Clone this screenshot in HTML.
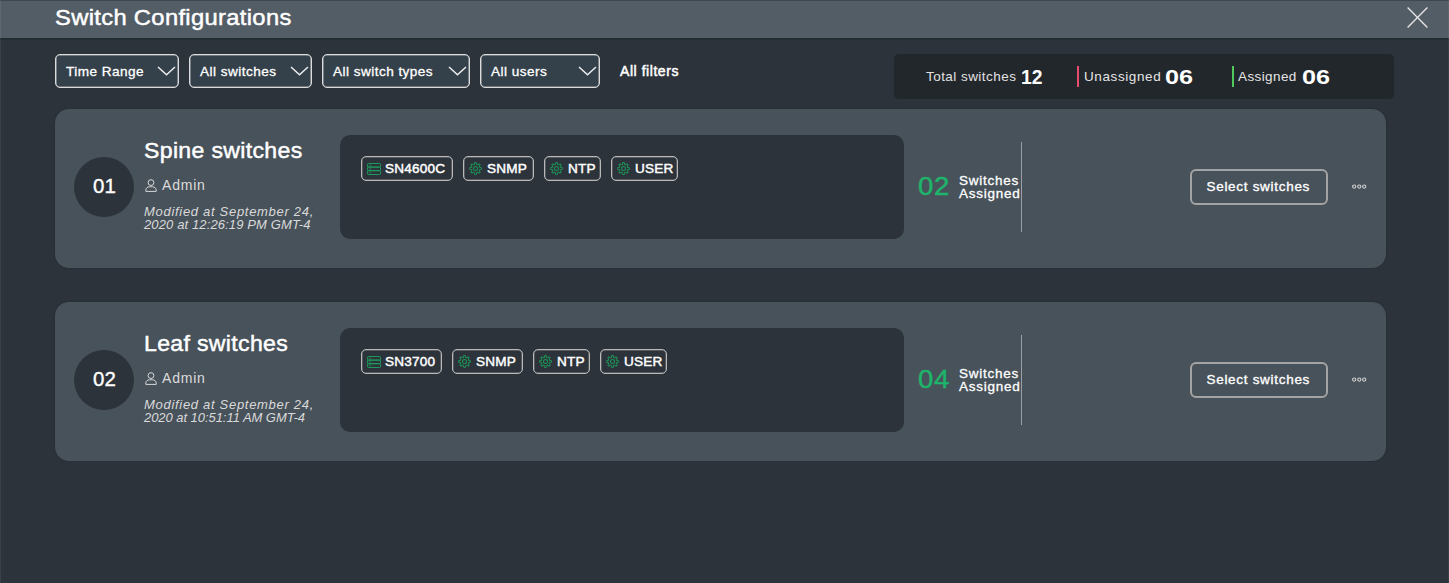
<!DOCTYPE html>
<html><head><meta charset="utf-8">
<style>
*{box-sizing:border-box;margin:0;padding:0}
html,body{width:1449px;height:583px;overflow:hidden;background:#2c333a;font-family:"Liberation Sans",sans-serif;color:#fff}
.abs{position:absolute}
#edgeL{left:0;top:0;width:1px;height:583px;background:rgba(255,255,255,0.065)}
#edgeR{right:0;top:0;width:1px;height:583px;background:rgba(255,255,255,0.065)}
#hdr{left:0;top:0;width:1449px;height:38px;background:#535d66;border-top:1px solid #3f474f}
#hdrline{left:0;top:38px;width:1449px;height:2px;background:#232c31}
.t{position:absolute;white-space:nowrap;line-height:1}
.dd{position:absolute;top:54px;height:34px;border:1px solid #dcdcdc;border-radius:5px;background:#35414a;box-shadow:inset 0 0 0 0.6px rgba(220,220,220,.7)}
.dd .lbl{position:absolute;left:10px;top:9.6px;font-size:13.6px;white-space:nowrap;line-height:1;letter-spacing:0.45px;-webkit-text-stroke:0.3px #fff}
.chev{position:absolute;right:2.2px;top:11.2px;width:19px;height:10px}
.stats{left:894px;top:54px;width:500px;height:45px;background:#22272b;border-radius:5px}
.card{position:absolute;left:55px;width:1331px;height:159px;background:#48525a;border-radius:14px;box-shadow:0 0 2px rgba(0,0,0,.25)}
.circ{position:absolute;left:19px;top:48px;width:60px;height:60px;border-radius:50%;background:#2c333a}
.inner{position:absolute;left:285px;top:26px;width:564px;height:104px;background:#2c333a;border-radius:10px}
.chip{position:absolute;top:21px;height:25px;border:1px solid #b8b8b8;border-radius:5px;box-shadow:inset 0 0 0 0.5px rgba(184,184,184,.6)}
.chip svg{position:absolute;left:6px;top:5px}
.chip .ct{position:absolute;top:5.3px;font-size:13.6px;-webkit-text-stroke:0.45px #fff;line-height:1;white-space:nowrap;letter-spacing:0.2px}
.vline{position:absolute;left:966px;top:33px;width:1px;height:90px;background:#9aa0a5}
.btn{position:absolute;left:1135px;top:60px;width:138px;height:36px;border:2px solid #a3a3a3;border-radius:6px}
.dots{position:absolute;left:1297px;top:75px}
</style></head><body>
<svg width="0" height="0" style="position:absolute"><defs>
<symbol id="gear" viewBox="0 0 24 24"><g stroke="#1e9457" stroke-width="1.85" fill="none" stroke-linejoin="round"><path d="M12.0 1.0 L12.4 1.0 L12.9 1.1 L13.3 1.4 L13.6 1.9 L13.8 2.9 L14.0 3.8 L14.1 4.4 L14.4 4.7 L14.6 4.9 L14.9 5.0 L15.2 5.1 L15.5 5.1 L15.9 5.1 L16.4 4.8 L17.2 4.3 L18.0 3.7 L18.6 3.6 L19.1 3.7 L19.5 3.9 L19.8 4.2 L20.1 4.5 L20.3 4.9 L20.4 5.4 L20.3 6.0 L19.7 6.8 L19.2 7.6 L18.9 8.1 L18.9 8.5 L18.9 8.8 L19.0 9.1 L19.1 9.4 L19.3 9.6 L19.6 9.9 L20.2 10.0 L21.1 10.2 L22.1 10.4 L22.6 10.7 L22.9 11.1 L23.0 11.6 L23.0 12.0 L23.0 12.4 L22.9 12.9 L22.6 13.3 L22.1 13.6 L21.1 13.8 L20.2 14.0 L19.6 14.1 L19.3 14.4 L19.1 14.6 L19.0 14.9 L18.9 15.2 L18.9 15.5 L18.9 15.9 L19.2 16.4 L19.7 17.2 L20.3 18.0 L20.4 18.6 L20.3 19.1 L20.1 19.5 L19.8 19.8 L19.5 20.1 L19.1 20.3 L18.6 20.4 L18.0 20.3 L17.2 19.7 L16.4 19.2 L15.9 18.9 L15.5 18.9 L15.2 18.9 L14.9 19.0 L14.6 19.1 L14.4 19.3 L14.1 19.6 L14.0 20.2 L13.8 21.1 L13.6 22.1 L13.3 22.6 L12.9 22.9 L12.4 23.0 L12.0 23.0 L11.6 23.0 L11.1 22.9 L10.7 22.6 L10.4 22.1 L10.2 21.1 L10.0 20.2 L9.9 19.6 L9.6 19.3 L9.4 19.1 L9.1 19.0 L8.8 18.9 L8.5 18.9 L8.1 18.9 L7.6 19.2 L6.8 19.7 L6.0 20.3 L5.4 20.4 L4.9 20.3 L4.5 20.1 L4.2 19.8 L3.9 19.5 L3.7 19.1 L3.6 18.6 L3.7 18.0 L4.3 17.2 L4.8 16.4 L5.1 15.9 L5.1 15.5 L5.1 15.2 L5.0 14.9 L4.9 14.6 L4.7 14.4 L4.4 14.1 L3.8 14.0 L2.9 13.8 L1.9 13.6 L1.4 13.3 L1.1 12.9 L1.0 12.4 L1.0 12.0 L1.0 11.6 L1.1 11.1 L1.4 10.7 L1.9 10.4 L2.9 10.2 L3.8 10.0 L4.4 9.9 L4.7 9.6 L4.9 9.4 L5.0 9.1 L5.1 8.8 L5.1 8.5 L5.1 8.1 L4.8 7.6 L4.3 6.8 L3.7 6.0 L3.6 5.4 L3.7 4.9 L3.9 4.5 L4.2 4.2 L4.5 3.9 L4.9 3.7 L5.4 3.6 L6.0 3.7 L6.8 4.3 L7.6 4.8 L8.1 5.1 L8.5 5.1 L8.8 5.1 L9.1 5.0 L9.4 4.9 L9.6 4.7 L9.9 4.4 L10.0 3.8 L10.2 2.9 L10.4 1.9 L10.7 1.4 L11.1 1.1 L11.6 1.0Z"/><circle cx="12" cy="12" r="3.7"/></g></symbol>
<symbol id="srv" viewBox="0 0 14 12"><g stroke="#1f9a5c" stroke-width="1" fill="none"><rect x="0.5" y="0.5" width="13" height="3.6" rx="0.9"/><rect x="0.5" y="4.1" width="13" height="3.6" rx="0.9"/><rect x="0.5" y="7.7" width="13" height="3.8" rx="0.9"/><path d="M2.3 1.5v1.6M3.8 1.5v1.6M2.3 5.1v1.6M3.8 5.1v1.6M2.3 8.7v1.6M3.8 8.7v1.6" stroke-width="0.6"/></g></symbol>
</defs></svg>
<div class="abs" id="hdr"></div>
<div class="abs" id="hdrline"></div>
<div class="abs" id="edgeL"></div>
<div class="abs" id="edgeR"></div>
<div class="t" style="left:55px;top:6.8px;font-size:21.6px;letter-spacing:0.3px;-webkit-text-stroke:0.45px #fff;transform:scaleX(1.1);transform-origin:0 0">Switch Configurations</div>
<svg class="abs" style="left:1405px;top:5.2px" width="24" height="24" viewBox="0 0 24 24"><path d="M2.6 2.6L22.4 22.4M22.4 2.6L2.6 22.4" stroke="#e6e6e6" stroke-width="1.35" fill="none"/></svg>

<div class="dd" style="left:55px;width:124px"><div class="lbl">Time Range</div><svg class="chev" viewBox="0 0 19 10"><path d="M1 1L9.5 8.8L18 1" stroke="#eee" stroke-width="1.5" fill="none"/></svg></div>
<div class="dd" style="left:189px;width:123px"><div class="lbl">All switches</div><svg class="chev" viewBox="0 0 19 10"><path d="M1 1L9.5 8.8L18 1" stroke="#eee" stroke-width="1.5" fill="none"/></svg></div>
<div class="dd" style="left:322px;width:148px"><div class="lbl">All switch types</div><svg class="chev" viewBox="0 0 19 10"><path d="M1 1L9.5 8.8L18 1" stroke="#eee" stroke-width="1.5" fill="none"/></svg></div>
<div class="dd" style="left:480px;width:120px"><div class="lbl">All users</div><svg class="chev" viewBox="0 0 19 10"><path d="M1 1L9.5 8.8L18 1" stroke="#eee" stroke-width="1.5" fill="none"/></svg></div>
<div class="t" style="left:620px;top:64px;font-size:14px;-webkit-text-stroke:0.5px #fff;letter-spacing:0.55px">All filters</div>

<div class="abs stats"></div>
<div class="t" style="left:926px;top:70px;font-size:13.5px;color:#e2e2e2;letter-spacing:0.45px">Total switches</div>
<div class="t" style="left:1020.5px;top:66.3px;font-size:21px;font-weight:bold;transform:scaleX(0.92);transform-origin:0 0">12</div>
<div class="abs" style="left:1077px;top:66px;width:2px;height:21px;background:#e84a6e"></div>
<div class="t" style="left:1084px;top:70px;font-size:13.5px;color:#e6e6e6;letter-spacing:0.6px">Unassigned</div>
<div class="t" style="left:1165px;top:66.3px;font-size:21px;font-weight:bold;transform:scaleX(1.2);transform-origin:0 0">06</div>
<div class="abs" style="left:1232px;top:66px;width:2px;height:21px;background:#4fc85e"></div>
<div class="t" style="left:1238px;top:70px;font-size:13.5px;color:#e6e6e6;letter-spacing:0.4px">Assigned</div>
<div class="t" style="left:1302px;top:66.3px;font-size:21px;font-weight:bold;transform:scaleX(1.2);transform-origin:0 0">06</div>

<!-- CARDS -->

<div class="card" style="top:109px">
 <div class="circ"></div>
 <div class="t" style="left:38px;top:67px;font-size:20.5px;-webkit-text-stroke:0.35px #fff">01</div>
 <div class="t" style="left:89px;top:30.8px;font-size:21.8px;letter-spacing:0.3px;-webkit-text-stroke:0.45px #fff;transform:scaleX(1.06);transform-origin:0 0">Spine switches</div>
 <svg class="abs" style="left:90px;top:70px" width="12" height="13" viewBox="0 0 12 13"><circle cx="6" cy="3.6" r="2.9" stroke="#d8d8d8" stroke-width="1" fill="none"/><path d="M0.8 12.4V11.2C0.8 9 2.6 7.8 4.4 7.8H7.6C9.4 7.8 11.2 9 11.2 11.2V12.4Z" stroke="#d8d8d8" stroke-width="1" fill="none"/></svg>
 <div class="t" style="left:107px;top:69.2px;font-size:14px;color:#dcdcdc;letter-spacing:0.8px">Admin</div>
 <div class="t" style="left:89px;top:96px;font-size:13px;font-style:italic;color:#dadada;line-height:13px"><span style="letter-spacing:0.7px">Modified at September 24,</span><br><span style="letter-spacing:0.12px">2020 at 12:26:19 PM GMT-4</span></div>
 <div class="inner">
  <div class="chip" style="left:21px;width:92px"><svg width="14" height="12" style="left:5px;top:6px"><use href="#srv" width="14" height="12"/></svg><div class="ct" style="left:23px">SN4600C</div></div><div class="chip" style="left:123px;width:71px"><svg width="13" height="13" style="left:5px;top:4.5px"><use href="#gear" width="13" height="13"/></svg><div class="ct" style="left:23px">SNMP</div></div><div class="chip" style="left:204px;width:57px"><svg width="13" height="13" style="left:5px;top:4.5px"><use href="#gear" width="13" height="13"/></svg><div class="ct" style="left:23px">NTP</div></div><div class="chip" style="left:271px;width:67px"><svg width="13" height="13" style="left:5px;top:4.5px"><use href="#gear" width="13" height="13"/></svg><div class="ct" style="left:23px">USER</div></div>
 </div>
 <div class="t" style="left:863px;top:65px;font-size:25px;color:#1eb46b;-webkit-text-stroke:0.45px #1eb46b;letter-spacing:0.6px;transform:scaleX(1.1);transform-origin:0 0">02</div>
 <div class="t" style="left:904px;top:66px;font-size:13.5px;-webkit-text-stroke:0.3px #fff;line-height:12.5px;letter-spacing:0.75px">Switches<br>Assigned</div>
 <div class="vline"></div>
 <div class="btn"><div class="t" style="left:14.5px;top:8.5px;font-size:13.5px;-webkit-text-stroke:0.35px #fff;letter-spacing:0.7px">Select switches</div></div>
 <svg class="dots" width="16" height="6" viewBox="0 0 16 6"><circle cx="2.2" cy="2.6" r="1.6" stroke="#d0d0d0" stroke-width="1.1" fill="none"/><circle cx="7.3" cy="2.6" r="1.6" stroke="#d0d0d0" stroke-width="1.1" fill="none"/><circle cx="12.2" cy="2.6" r="1.6" stroke="#d0d0d0" stroke-width="1.1" fill="none"/></svg>
</div>
<div class="card" style="top:302px">
 <div class="circ"></div>
 <div class="t" style="left:38px;top:67px;font-size:20.5px;-webkit-text-stroke:0.35px #fff">02</div>
 <div class="t" style="left:89px;top:30.8px;font-size:21.8px;letter-spacing:0.3px;-webkit-text-stroke:0.45px #fff;transform:scaleX(1.06);transform-origin:0 0">Leaf switches</div>
 <svg class="abs" style="left:90px;top:70px" width="12" height="13" viewBox="0 0 12 13"><circle cx="6" cy="3.6" r="2.9" stroke="#d8d8d8" stroke-width="1" fill="none"/><path d="M0.8 12.4V11.2C0.8 9 2.6 7.8 4.4 7.8H7.6C9.4 7.8 11.2 9 11.2 11.2V12.4Z" stroke="#d8d8d8" stroke-width="1" fill="none"/></svg>
 <div class="t" style="left:107px;top:69.2px;font-size:14px;color:#dcdcdc;letter-spacing:0.8px">Admin</div>
 <div class="t" style="left:89px;top:96px;font-size:13px;font-style:italic;color:#dadada;line-height:13px"><span style="letter-spacing:0.7px">Modified at September 24,</span><br><span style="letter-spacing:-0.05px">2020 at 10:51:11 AM GMT-4</span></div>
 <div class="inner">
  <div class="chip" style="left:21px;width:81px"><svg width="14" height="12" style="left:5px;top:6px"><use href="#srv" width="14" height="12"/></svg><div class="ct" style="left:23px">SN3700</div></div><div class="chip" style="left:112px;width:71px"><svg width="13" height="13" style="left:5px;top:4.5px"><use href="#gear" width="13" height="13"/></svg><div class="ct" style="left:23px">SNMP</div></div><div class="chip" style="left:193px;width:57px"><svg width="13" height="13" style="left:5px;top:4.5px"><use href="#gear" width="13" height="13"/></svg><div class="ct" style="left:23px">NTP</div></div><div class="chip" style="left:260px;width:67px"><svg width="13" height="13" style="left:5px;top:4.5px"><use href="#gear" width="13" height="13"/></svg><div class="ct" style="left:23px">USER</div></div>
 </div>
 <div class="t" style="left:863px;top:65px;font-size:25px;color:#1eb46b;-webkit-text-stroke:0.45px #1eb46b;letter-spacing:0.6px;transform:scaleX(1.1);transform-origin:0 0">04</div>
 <div class="t" style="left:904px;top:66px;font-size:13.5px;-webkit-text-stroke:0.3px #fff;line-height:12.5px;letter-spacing:0.75px">Switches<br>Assigned</div>
 <div class="vline"></div>
 <div class="btn"><div class="t" style="left:14.5px;top:8.5px;font-size:13.5px;-webkit-text-stroke:0.35px #fff;letter-spacing:0.7px">Select switches</div></div>
 <svg class="dots" width="16" height="6" viewBox="0 0 16 6"><circle cx="2.2" cy="2.6" r="1.6" stroke="#d0d0d0" stroke-width="1.1" fill="none"/><circle cx="7.3" cy="2.6" r="1.6" stroke="#d0d0d0" stroke-width="1.1" fill="none"/><circle cx="12.2" cy="2.6" r="1.6" stroke="#d0d0d0" stroke-width="1.1" fill="none"/></svg>
</div>
</body></html>
